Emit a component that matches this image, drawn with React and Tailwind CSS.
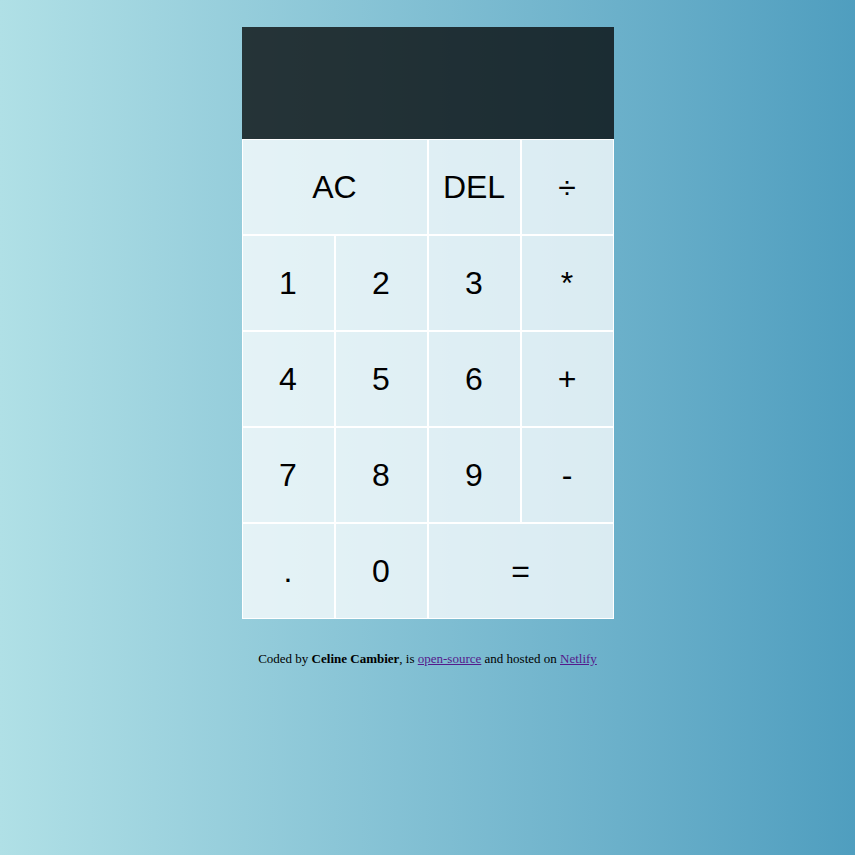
const keys = [
  { label: "AC", span: true },
  { label: "DEL" },
  { label: "÷" },
  { label: "1" },
  { label: "2" },
  { label: "3" },
  { label: "*" },
  { label: "4" },
  { label: "5" },
  { label: "6" },
  { label: "+" },
  { label: "7" },
  { label: "8" },
  { label: "9" },
  { label: "-" },
  { label: "." },
  { label: "0" },
  { label: "=", span: true },
];

export default function App() {
  return (
    <div className="min-h-screen bg-gradient-to-r from-[#b0e0e6] to-[#4f9ebf] pt-[27px] font-['Liberation_Serif',serif]">
      <div className="mx-auto grid w-[372px] grid-cols-[repeat(4,93px)] grid-rows-[112px_repeat(5,96px)]">
        <div className="col-span-4 bg-black/75" />
        {keys.map((k) => (
          <button
            key={k.label}
            className={`${k.span ? "col-span-2" : ""} border border-white bg-white/75 font-['Liberation_Sans',Arial,sans-serif] text-[32px] text-black`}
          >
            {k.label}
          </button>
        ))}
      </div>
      <p className="mt-[30px] text-center text-[13px] text-black">
        Coded by <b>Celine Cambier</b>, is{" "}
        <a href="#" className="text-[#551a8b] underline">open-source</a> and hosted on{" "}
        <a href="#" className="text-[#551a8b] underline">Netlify</a>
      </p>
    </div>
  );
}
